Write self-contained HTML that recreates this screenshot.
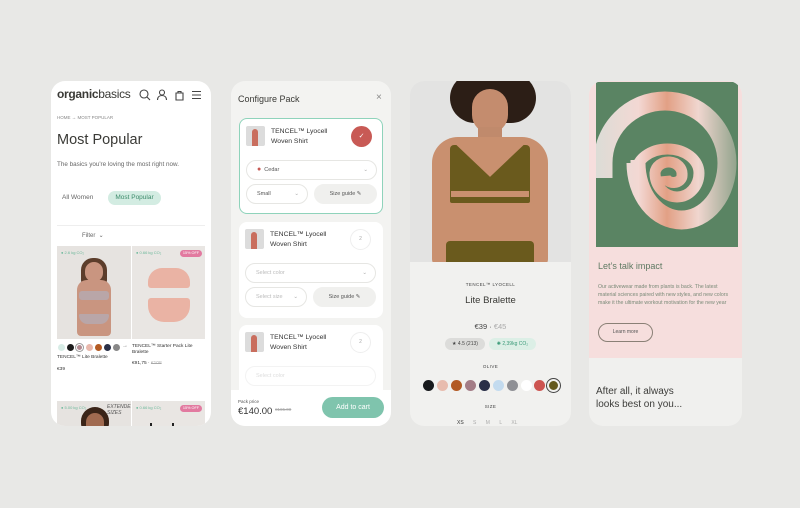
<!DOCTYPE html>
<html><head><meta charset="utf-8"><style>
*{margin:0;padding:0;box-sizing:border-box}
body{width:800px;height:508px;background:#e8e8e6;position:relative;overflow:hidden;font-family:"Liberation Sans",sans-serif;color:#3d3d3a}
.ph{position:absolute;top:81px;height:345px;border-radius:14px;overflow:hidden}
.a{position:absolute;white-space:nowrap}
.card{position:absolute;left:8px;width:144px;height:96px;background:#fff;border-radius:8px}
.fld{position:absolute;height:20px;border:1px solid #e6e6e3;border-radius:10px;font-size:5.5px;line-height:18px;padding-left:10px;color:#555}
.sw{position:absolute;width:11px;height:11px;border-radius:50%}
</style></head><body>

<!-- PHONE 1 -->
<div class="ph" style="left:51px;width:160px;background:#fff">
 <div class="a" style="left:6px;top:6px;font-size:12px;font-weight:bold;letter-spacing:-0.3px;color:#3a3a36">organic<span style="font-weight:normal">basics</span></div>
 <svg class="a" style="left:88px;top:8px" width="66" height="12" viewBox="0 0 66 12" fill="none" stroke="#444" stroke-width="1.1">
  <circle cx="5" cy="5" r="4"/><path d="M8 8l3 3"/>
  <circle cx="23" cy="3.5" r="2.5"/><path d="M18.5 11c0-3 2-4.5 4.5-4.5s4.5 1.5 4.5 4.5"/>
  <path d="M37 4h7v7h-7zM39 4V2.5h3V4"/>
  <path d="M53 2.5h9M53 6h9M53 9.5h9"/></svg>
 <div class="a" style="left:6px;top:34px;font-size:4.5px;color:#888">HOME → MOST POPULAR</div>
 <div class="a" style="left:6px;top:51px;font-size:14.5px;color:#3a3a36">Most Popular</div>
 <div class="a" style="left:6px;top:80px;font-size:6.3px;color:#666">The basics you're loving the most right now.</div>
 <div class="a" style="left:11px;top:113px;font-size:6.5px;color:#666">All Women</div>
 <div class="a" style="left:57px;top:110px;width:53px;height:14px;border-radius:7px;background:#d3ece2;color:#3b8a6a;font-size:6.5px;line-height:14px;text-align:center">Most Popular</div>
 <div class="a" style="left:6px;top:144px;width:148px;height:1px;background:#eee"></div>
 <div class="a" style="left:31px;top:151px;font-size:6px;color:#666">Filter &nbsp;⌄</div>
 <div class="a" style="left:6px;top:165px;width:74px;height:93px;background:#e6e3e0;overflow:hidden">
  <div class="a" style="left:4px;top:4px;font-size:4px;color:#6bb89a">● 2.6 kg CO₂</div>
  <div class="a" style="left:24px;top:12px;width:26px;height:28px;border-radius:12px 12px 6px 6px;background:#5c3d2b"></div>
  <div class="a" style="left:28px;top:16px;width:18px;height:20px;border-radius:9px;background:#c99580"></div>
  <div class="a" style="left:20px;top:34px;width:34px;height:56px;border-radius:10px 10px 4px 4px;background:#c99580"></div>
  <div class="a" style="left:22px;top:45px;width:30px;height:9px;background:#b9a6a8;border-radius:3px"></div>
  <div class="a" style="left:22px;top:68px;width:30px;height:10px;background:#b9a6a8;border-radius:2px 2px 12px 12px"></div>
 </div>
 <div class="a" style="left:81px;top:165px;width:73px;height:93px;background:#e9e6e3">
  <div class="a" style="left:4px;top:4px;font-size:4px;color:#6bb89a">● 0.66 kg CO₂</div>
  <div class="a" style="left:48px;top:4px;width:22px;height:7px;border-radius:4px;background:#e27aa0;color:#fff;font-size:3.8px;line-height:7px;text-align:center">15% OFF</div>
  <div class="a" style="left:16px;top:22px;width:42px;height:20px;background:#eab3a4;border-radius:14px 14px 3px 3px"></div>
  <div class="a" style="left:16px;top:52px;width:42px;height:24px;background:#eab3a4;border-radius:3px 3px 16px 16px"></div>
 </div>
 <div class="sw" style="left:7px;top:263px;width:7px;height:7px;background:#d7ece6"></div>
 <div class="sw" style="left:16px;top:263px;width:7px;height:7px;background:#1c1c1c"></div>
 <div class="sw" style="left:25px;top:263px;width:7px;height:7px;background:#b28a90;border:1px solid #fff;box-shadow:0 0 0 1px #999"></div>
 <div class="sw" style="left:35px;top:263px;width:7px;height:7px;background:#e9b9ad"></div>
 <div class="sw" style="left:44px;top:263px;width:7px;height:7px;background:#b45a22"></div>
 <div class="sw" style="left:53px;top:263px;width:7px;height:7px;background:#2a3047"></div>
 <div class="sw" style="left:62px;top:263px;width:7px;height:7px;background:#888"></div>
 <div class="a" style="left:71px;top:262px;font-size:6px;color:#888">→</div>
 <div class="a" style="left:6px;top:274px;font-size:4.8px;color:#333">TENCEL™ Lite Bralette</div>
 <div class="a" style="left:6px;top:286px;font-size:4.8px;color:#333">€39</div>
 <div class="a" style="left:81px;top:263px;font-size:4.8px;color:#333;line-height:6px">TENCEL™ Starter Pack Lite<br>Bralette</div>
 <div class="a" style="left:81px;top:280px;font-size:4.8px;color:#333">€91,75 · <span style="color:#aaa;text-decoration:line-through">€108</span></div>
 <div class="a" style="left:6px;top:320px;width:74px;height:30px;background:#e6e3e0;overflow:hidden">
  <div class="a" style="left:4px;top:4px;font-size:4px;color:#6bb89a">● 5.00 kg CO₂</div>
  <div class="a" style="left:50px;top:3px;font-size:5px;color:#555;font-style:italic;line-height:6px">EXTENDED<br>SIZES</div>
  <div class="a" style="left:24px;top:6px;width:28px;height:30px;border-radius:14px;background:#3a2418"></div>
  <div class="a" style="left:29px;top:12px;width:18px;height:22px;border-radius:9px;background:#a06a50"></div>
 </div>
 <div class="a" style="left:81px;top:320px;width:73px;height:30px;background:#e9e6e3">
  <div class="a" style="left:4px;top:4px;font-size:4px;color:#6bb89a">● 0.66 kg CO₂</div>
  <div class="a" style="left:48px;top:4px;width:22px;height:7px;border-radius:4px;background:#e27aa0;color:#fff;font-size:3.8px;line-height:7px;text-align:center">15% OFF</div>
  <div class="a" style="left:18px;top:22px;width:2px;height:10px;background:#222"></div><div class="a" style="left:40px;top:22px;width:2px;height:10px;background:#222"></div>
 </div>
</div>

<!-- PHONE 2 -->
<div class="ph" style="left:231px;width:160px;background:#f3f3f1">
 <div class="a" style="left:7px;top:13px;font-size:9px;color:#3a3a36">Configure Pack</div>
 <div class="a" style="left:145px;top:11px;font-size:10px;color:#888">×</div>
 <div class="card" style="top:37px;height:96px;border:1px solid #8fd3bb">
  <div class="a" style="left:6px;top:7px;width:19px;height:20px;background:#dcdcdc;border-radius:2px"><div class="a" style="left:6px;top:3px;width:6px;height:17px;background:#c96e5e;border-radius:3px 3px 0 0"></div></div>
  <div class="a" style="left:31px;top:8px;font-size:6.8px;line-height:10px;color:#333">TENCEL™ Lyocell<br>Woven Shirt</div>
  <div class="a" style="left:111px;top:7px;width:21px;height:21px;border-radius:50%;background:#c85a55;color:#fff;font-size:7px;line-height:21px;text-align:center">✓</div>
  <div class="fld" style="left:6px;top:41px;width:131px;background:#fff"><span style="color:#c85a55;font-size:7px">●</span> &nbsp;Cedar<span style="position:absolute;right:8px;color:#aaa">⌄</span></div>
  <div class="fld" style="left:6px;top:65px;width:62px">Small<span style="position:absolute;right:8px;color:#aaa">⌄</span></div>
  <div class="fld" style="left:74px;top:65px;width:63px;background:#f0f0ee;border-color:#f0f0ee;padding:0;text-align:center">Size guide ✎</div>
 </div>
 <div class="card" style="top:141px">
  <div class="a" style="left:6px;top:7px;width:19px;height:20px;background:#dcdcdc;border-radius:2px"><div class="a" style="left:6px;top:3px;width:6px;height:17px;background:#c96e5e;border-radius:3px 3px 0 0"></div></div>
  <div class="a" style="left:31px;top:8px;font-size:6.8px;line-height:10px;color:#333">TENCEL™ Lyocell<br>Woven Shirt</div>
  <div class="a" style="left:111px;top:7px;width:21px;height:21px;border-radius:50%;border:1px solid #eee;color:#aaa;font-size:5px;line-height:19px;text-align:center">2</div>
  <div class="fld" style="left:6px;top:41px;width:131px;color:#bbb">Select color<span style="position:absolute;right:8px;color:#aaa">⌄</span></div>
  <div class="fld" style="left:6px;top:65px;width:62px;color:#bbb">Select size<span style="position:absolute;right:8px;color:#aaa">⌄</span></div>
  <div class="fld" style="left:74px;top:65px;width:63px;background:#f0f0ee;border-color:#f0f0ee;padding:0;text-align:center">Size guide ✎</div>
 </div>
 <div class="card" style="top:244px;height:80px">
  <div class="a" style="left:6px;top:7px;width:19px;height:20px;background:#dcdcdc;border-radius:2px"><div class="a" style="left:6px;top:3px;width:6px;height:17px;background:#c96e5e;border-radius:3px 3px 0 0"></div></div>
  <div class="a" style="left:31px;top:8px;font-size:6.8px;line-height:10px;color:#333">TENCEL™ Lyocell<br>Woven Shirt</div>
  <div class="a" style="left:111px;top:7px;width:21px;height:21px;border-radius:50%;border:1px solid #eee;color:#aaa;font-size:5px;line-height:19px;text-align:center">2</div>
  <div class="fld" style="left:6px;top:41px;width:131px;color:#ddd;border-color:#f3f3f3">Select color</div>
 </div>
 <div class="a" style="left:0;top:309px;width:160px;height:36px;background:#fff">
  <div class="a" style="left:7px;top:9px;font-size:4.5px;color:#555">Pack price</div>
  <div class="a" style="left:7px;top:16px;font-size:9.5px;color:#333">€140.00 <span style="font-size:4.5px;color:#aaa;text-decoration:line-through;vertical-align:3px">€165.00</span></div>
  <div class="a" style="left:91px;top:7px;width:62px;height:21px;border-radius:11px;background:#7fc4ad;color:#fff;font-size:7px;line-height:21px;text-align:center">Add to cart</div>
 </div>
</div>

<!-- PHONE 3 -->
<div class="ph" style="left:410px;width:161px;background:#f1f1ef">
 <div class="a" style="left:0;top:0;width:161px;height:181px;background:#e3e3e2;overflow:hidden">
  <div class="a" style="left:40px;top:-8px;width:86px;height:50px;border-radius:40px;background:#2c1e16"></div>
  <div class="a" style="left:62px;top:8px;width:36px;height:44px;border-radius:18px;background:#c48c6e"></div>
  <div class="a" style="left:68px;top:46px;width:24px;height:16px;background:#c08a6c"></div>
  <div class="a" style="left:22px;top:56px;width:116px;height:130px;border-radius:26px 26px 8px 8px;background:#c9906f"></div>
  <div class="a" style="left:40px;top:64px;width:80px;height:58px;background:#6a5a1d;border-radius:4px 4px 2px 2px;clip-path:polygon(0 0,8% 0,50% 55%,92% 0,100% 0,100% 100%,0 100%)"></div>
  <div class="a" style="left:41px;top:110px;width:78px;height:6px;background:#c9906f"></div>
  <div class="a" style="left:36px;top:160px;width:88px;height:30px;background:#6a5a1d;border-radius:4px"></div>
 </div>
 <div class="a" style="left:0;top:201px;width:161px;text-align:center;font-size:4.5px;letter-spacing:.4px;color:#444">TENCEL™ LYOCELL</div>
 <div class="a" style="left:0;top:214px;width:161px;text-align:center;font-size:9.5px;color:#3a3a36">Lite Bralette</div>
 <div class="a" style="left:0;top:241px;width:161px;text-align:center;font-size:7.5px;color:#444">€39 · <span style="color:#aaa">€45</span></div>
 <div class="a" style="left:35px;top:257px;width:40px;height:12px;border-radius:6px;background:#dcdcda;font-size:5px;line-height:12px;text-align:center;color:#444">★ 4.5 (213)</div>
 <div class="a" style="left:79px;top:257px;width:47px;height:12px;border-radius:6px;background:#dcefe6;font-size:5px;line-height:12px;text-align:center;color:#3a9a78">✺ 2,39kg CO₂</div>
 <div class="a" style="left:0;top:283px;width:161px;text-align:center;font-size:4.5px;letter-spacing:.4px;color:#444">OLIVE</div>
 <div class="sw" style="left:13px;top:299px;background:#17191c"></div>
 <div class="sw" style="left:27px;top:299px;background:#e8bcae"></div>
 <div class="sw" style="left:41px;top:299px;background:#b25a24"></div>
 <div class="sw" style="left:55px;top:299px;background:#a37c86"></div>
 <div class="sw" style="left:69px;top:299px;background:#2a2f48"></div>
 <div class="sw" style="left:83px;top:299px;background:#c3dbef"></div>
 <div class="sw" style="left:97px;top:299px;background:#8f9095"></div>
 <div class="sw" style="left:111px;top:299px;background:#fff"></div>
 <div class="sw" style="left:124px;top:299px;background:#cd5551"></div>
 <div class="sw" style="left:137px;top:298px;width:13px;height:13px;background:#645a1e;border:2px solid #f1f1ef;box-shadow:0 0 0 1px #444"></div>
 <div class="a" style="left:0;top:323px;width:161px;text-align:center;font-size:4.5px;letter-spacing:.4px;color:#444">SIZE</div>
 <div class="a" style="left:47px;top:339px;font-size:5px;color:#aaa;word-spacing:8px"><span style="color:#333">XS</span> S M L XL</div>
</div>

<!-- PHONE 4 -->
<div class="ph" style="left:589px;width:153px;background:#f0f0ee">
 <div class="a" style="left:0;top:0;width:153px;height:277px;background:#f6dedd"></div>
 <svg class="a" style="left:7px;top:1px" width="142" height="165" viewBox="596 82 142 165">
  <defs><linearGradient id="g" x1="596" y1="0" x2="738" y2="0" gradientUnits="userSpaceOnUse">
   <stop offset="0" stop-color="#dcdcd6"/><stop offset=".3" stop-color="#f3d8d3"/><stop offset=".5" stop-color="#e2a085"/><stop offset=".72" stop-color="#f0d6cf"/><stop offset="1" stop-color="#8fa28a"/></linearGradient></defs>
  <rect x="596" y="82" width="142" height="165" fill="#5a8463"/>
  <path d="M603 178 L603 163 A62 62 0 0 1 727 163 A45.5 57 0 0 1 636 163" fill="none" stroke="url(#g)" stroke-width="19"/>
  <path d="M636 160 L636 173 A31.5 24 0 0 1 699 173 A22 24 0 0 1 655 173 A13.5 12 0 0 1 682 175 A8.5 7 0 0 1 665 176" fill="none" stroke="url(#g)" stroke-width="11"/>
 </svg>
 <div class="a" style="left:9px;top:180px;font-size:9px;color:#5f7a63">Let’s talk impact</div>
 <div class="a" style="left:9px;top:202px;font-size:5.2px;line-height:8px;color:#7a8a78;white-space:normal;width:135px">Our activewear made from plants is back. The latest material sciences paired with new styles, and new colors make it the ultimate workout motivation for the new year</div>
 <div class="a" style="left:9px;top:242px;width:55px;height:19px;border:1px solid #8a8076;border-radius:10px;font-size:5px;line-height:17px;text-align:center;color:#555">Learn more</div>
 <div class="a" style="left:7px;top:304px;font-size:10px;line-height:13px;color:#3d3d3a">After all, it always<br>looks best on you...</div>
</div>
</body></html>
